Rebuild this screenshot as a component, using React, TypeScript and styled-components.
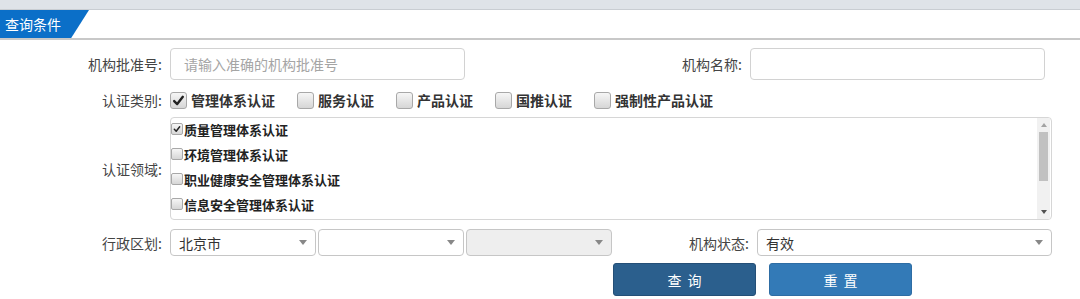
import * as React from 'react'
import styled, { createGlobalStyle } from 'styled-components'

const Global = createGlobalStyle`
  html, body {
    margin: 0;
    padding: 0;
    background: #fff;
  }
  body {
    font-family: "Noto Sans CJK SC", "Noto Sans", "Liberation Sans", sans-serif;
    font-size: 14px;
    color: #333;
  }
`

const Page = styled.div`
  width: 1080px;
  height: 299px;
  overflow: hidden;
`

const TopBand = styled.div`
  height: 9px;
  background: #dfe3e8;
  border-bottom: 1px solid #c9cdd2;
`

const TitleBar = styled.div`
  height: 28px;
  border-bottom: 2px solid #c8c8c8;
  display: flex;
`

const TitleTab = styled.div`
  width: 89px;
  background: #0b6fc8;
  color: #fff;
  font-size: 14px;
  line-height: 28px;
  padding-left: 5px;
  box-sizing: border-box;
  clip-path: polygon(0 0, 100% 0, 80% 100%, 0 100%);
`

const Form = styled.div`
  display: flex;
  flex-direction: column;
  padding-top: 8px;
`

const Row = styled.div<{ $h: number; $mt?: number }>`
  display: flex;
  align-items: center;
  height: ${({ $h }) => $h}px;
  margin-top: ${({ $mt }) => $mt ?? 0}px;
`

const Label = styled.div<{ $w: number }>`
  width: ${({ $w }) => $w}px;
  text-align: right;
  padding-right: 8px;
  box-sizing: border-box;
  color: #444;
  white-space: nowrap;
  flex-shrink: 0;
`

const TextInput = styled.div<{ $w: number }>`
  width: ${({ $w }) => $w}px;
  height: 32px;
  box-sizing: border-box;
  border: 1px solid #d2d2d2;
  border-radius: 4px;
  padding-left: 13px;
  display: flex;
  align-items: center;
  color: #a5a5a5;
`

const CheckGroup = styled.div`
  display: flex;
  align-items: center;
`

const CheckItem = styled.label<{ $w: number }>`
  display: flex;
  align-items: center;
  width: ${({ $w }) => $w}px;
  font-weight: bold;
  color: #333;
  white-space: nowrap;
`

const Box = styled.span<{ $size: number }>`
  width: ${({ $size }) => $size}px;
  height: ${({ $size }) => $size}px;
  box-sizing: border-box;
  border: 1px solid #a8a8a8;
  border-radius: ${({ $size }) => ($size > 14 ? 3 : 2)}px;
  background: linear-gradient(#f6f6f6, #d6d6d6);
  display: inline-flex;
  align-items: center;
  justify-content: center;
  margin-right: ${({ $size }) => ($size > 14 ? 4 : 1)}px;
  flex-shrink: 0;
`

const Check = ({ size, checked }: { size: number; checked?: boolean }) => (
  <Box $size={size}>
    {checked && (
      <svg width={size - 4} height={size - 4} viewBox="0 0 12 12">
        <path d="M2 6.5 L4.8 9.3 L10 2.6" stroke="#222" strokeWidth="2.2" fill="none" strokeLinecap="round" strokeLinejoin="round" />
      </svg>
    )}
  </Box>
)

const ListBox = styled.div`
  width: 882px;
  height: 103px;
  box-sizing: border-box;
  border: 1px solid #d6d6d6;
  border-radius: 4px;
  display: flex;
  overflow: hidden;
`

const ListItems = styled.div`
  flex: 1;
  display: flex;
  flex-direction: column;
`

const ListItem = styled.div`
  height: 25px;
  box-sizing: border-box;
  padding-bottom: 3px;
  display: flex;
  align-items: center;
  font-size: 13px;
  font-weight: bold;
  color: #222;
  white-space: nowrap;
`

const ScrollBar = styled.div`
  width: 13px;
  background: #f1f1f1;
  display: flex;
  flex-direction: column;
  align-items: center;
  margin-right: 1px;
`

const Arrow = styled.div<{ $up?: boolean }>`
  width: 0;
  height: 0;
  border-left: 3.5px solid transparent;
  border-right: 3.5px solid transparent;
  ${({ $up }) => ($up ? 'border-bottom: 4px solid #a3a3a3;' : 'border-top: 4px solid #505050;')}
  margin: ${({ $up }) => ($up ? '5px 0 5px' : 'auto 0 5px')};
`

const Thumb = styled.div`
  width: 9px;
  height: 49px;
  background: #c1c1c1;
`

const Select = styled.div<{ $w: number; $disabled?: boolean }>`
  width: ${({ $w }) => $w}px;
  height: 27px;
  box-sizing: border-box;
  border: 1px solid #c6c6c6;
  border-radius: 4px;
  background: ${({ $disabled }) => ($disabled ? '#eeeeee' : '#fff')};
  display: flex;
  align-items: center;
  padding: 0 8px 0 8px;
  margin-right: 2px;
  color: #333;
  flex-shrink: 0;
`

const SelectText = styled.span`
  flex: 1;
`

const Caret = styled.span`
  width: 0;
  height: 0;
  border-left: 4px solid transparent;
  border-right: 4px solid transparent;
  border-top: 5px solid #888;
`

const Button = styled.div<{ $bg: string; $border: string; $ml: number }>`
  width: 143px;
  height: 33px;
  box-sizing: border-box;
  margin-left: ${({ $ml }) => $ml}px;
  background: ${({ $bg }) => $bg};
  border: 1px solid ${({ $border }) => $border};
  border-radius: 3px;
  color: #fff;
  font-size: 14px;
  letter-spacing: 6px;
  display: flex;
  align-items: center;
  justify-content: center;
  padding-left: 6px;
`

const categories: [string, number, boolean][] = [
  ['管理体系认证', 127, true],
  ['服务认证', 99, false],
  ['产品认证', 99, false],
  ['国推认证', 99, false],
  ['强制性产品认证', 140, false]
]

const domains = ['质量管理体系认证', '环境管理体系认证', '职业健康安全管理体系认证', '信息安全管理体系认证']

export default function App() {
  return (
    <Page>
      <Global />
      <TopBand />
      <TitleBar>
        <TitleTab>查询条件</TitleTab>
      </TitleBar>
      <Form>
        <Row $h={32}>
          <Label $w={170}>机构批准号:</Label>
          <TextInput $w={295}>请输入准确的机构批准号</TextInput>
          <Label $w={285}>机构名称:</Label>
          <TextInput $w={295} />
        </Row>
        <Row $h={24} $mt={8}>
          <Label $w={170}>认证类别:</Label>
          <CheckGroup>
            {categories.map(([text, w, checked]) => (
              <CheckItem key={text} $w={w}>
                <Check size={17} checked={checked} />
                {text}
              </CheckItem>
            ))}
          </CheckGroup>
        </Row>
        <Row $h={103} $mt={5}>
          <Label $w={170}>认证领域:</Label>
          <ListBox>
            <ListItems>
              {domains.map((d, i) => (
                <ListItem key={d}>
                  <Check size={12} checked={i === 0} />
                  {d}
                </ListItem>
              ))}
            </ListItems>
            <ScrollBar>
              <Arrow $up />
              <Thumb />
              <Arrow />
            </ScrollBar>
          </ListBox>
        </Row>
        <Row $h={27} $mt={9}>
          <Label $w={170}>行政区划:</Label>
          <Select $w={146}>
            <SelectText>北京市</SelectText>
            <Caret />
          </Select>
          <Select $w={146}>
            <SelectText />
            <Caret />
          </Select>
          <Select $w={146} $disabled>
            <SelectText />
            <Caret />
          </Select>
          <Label $w={143}>机构状态:</Label>
          <Select $w={295}>
            <SelectText>有效</SelectText>
            <Caret />
          </Select>
        </Row>
        <Row $h={33} $mt={7}>
          <Button $bg="#2b5f8d" $border="#244f77" $ml={613}>查询</Button>
          <Button $bg="#337ab7" $border="#2e6da4" $ml={13}>重置</Button>
        </Row>
      </Form>
    </Page>
  )
}
